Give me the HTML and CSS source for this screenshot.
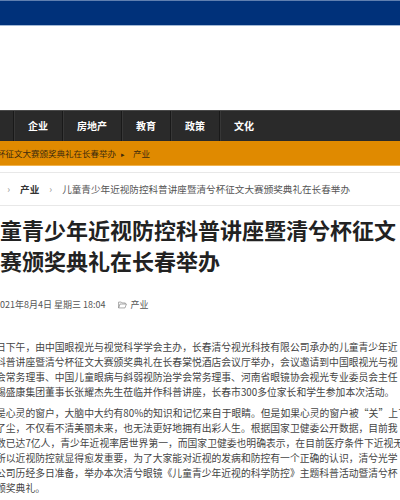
FILE: index.html
```html
<!DOCTYPE html>
<html lang="zh-CN">
<head>
  <meta charset="UTF-8">
  <meta name="viewport" content="width=device-width, initial-scale=1.0">
  <title>儿童青少年近视防控科普讲座暨清兮杯征文大赛颁奖典礼在长春举办</title>
  <link rel="stylesheet" href="styles.css">
</head>
<body>
  <div class="topbar"></div>
  <div class="header"></div>

  <nav class="nav">
    <ul class="nav-list">
      <li class="nav-item">首页</li>
      <li class="nav-item">企业</li>
      <li class="nav-item">房地产</li>
      <li class="nav-item">教育</li>
      <li class="nav-item">政策</li>
      <li class="nav-item">文化</li>
    </ul>
  </nav>

  <!-- scrolling news ticker -->
  <div class="ticker">
    <div class="ticker-inner">
      <span>儿童青少年近视防控科普讲座暨清兮杯征文大赛颁奖典礼在长春举办</span><span class="ticker-arrow">▸</span><span>产业</span>
    </div>
  </div>

  <div class="article">
    <div class="crumbs">
      <span>首页</span><span class="crumb-sep">›</span><span class="crumb-cat">产业</span><span class="crumb-sep">›</span><span>儿童青少年近视防控科普讲座暨清兮杯征文大赛颁奖典礼在长春举办</span>
    </div>

    <h1 class="title">儿童青少年近视防控科普讲座暨清兮杯征文大赛颁奖典礼在长春举办</h1>

    <div class="meta">
      <svg class="meta-icon" viewBox="0 0 10 10"><circle cx="5" cy="5" r="4.2" fill="none" stroke="#888" stroke-width="0.9"/><path d="M5 2.6V5h1.8" fill="none" stroke="#888" stroke-width="0.9"/></svg>
      <span>2021年8月4日 星期三 18:04</span>
      <svg class="meta-icon folder" viewBox="0 0 10 9"><path d="M0.6 1.2h3l0.9 1h3.6v1.2M0.6 1.2v6.6h7.2l1.6-4.4H2.2L0.6 7.8" fill="none" stroke="#888" stroke-width="0.8" stroke-linejoin="round"/></svg>
      <span>产业</span>
    </div>

    <div class="content">
      <p>日下午，由中国眼视光与视觉科学学会主办，长春清兮视光科技有限公司承办的儿童青少年近<br>科普讲座暨清兮杯征文大赛颁奖典礼在长春棠悦酒店会议厅举办，会议邀请到中国眼视光与视<br>会常务理事、中国儿童眼病与斜弱视防治学会常务理事、河南省眼镜协会视光专业委员会主任<br>锡盛康集团董事长张耀杰先生莅临并作科普讲座，长春市300多位家长和学生参加本次活动。</p>
      <p>是心灵的窗户，大脑中大约有80%的知识和记忆来自于眼睛。但是如果心灵的窗户被“关”上了，<br>了尘，不仅看不清美丽未来，也无法更好地拥有出彩人生。根据国家卫健委公开数据，目前我<br>数已达7亿人，青少年近视率居世界第一，而国家卫健委也明确表示，在目前医疗条件下近视无<br>所以近视防控就显得愈发重要，为了大家能对近视的发病和防控有一个正确的认识，清兮光学<br>公司历经多日准备，举办本次清兮眼镜《儿童青少年近视的科学防控》主题科普活动暨清兮杯<br>颁奖典礼。</p>
    </div>
  </div>
</body>
</html>
```

FILE: styles.css
```css
/* Reset basic styles */
* {
  margin: 0;
  padding: 0;
  box-sizing: border-box;
}

html,
body {
  overflow: hidden;
}

body {
  font-family: "Noto Sans CJK SC", "Noto Sans", sans-serif;
  background-color: #ffffff;
  color: #333;
}

.topbar {
  height: 26px;
  background-color: #00317a;
  border-top: 1px solid #5f7fb0;
  border-bottom: 1px solid #a3b9d6;
}

.header {
  height: 84px;
}

/* Main navigation */
.nav {
  height: 31px;
  background-color: #2a2a2a;
  border-top: 1px solid #4a4a4a;
}

.nav-list {
  display: flex;
  list-style: none;
  margin-left: -35px;
  height: 100%;
}

.nav-item {
  padding: 0 14px;
  color: #ffffff;
  font-size: 10px;
  font-weight: bold;
  line-height: 30px;
  border-left: 1px solid #191919;
  box-shadow: inset 1px 0 0 #373737;
}

.nav-item:first-child {
  border-left: none;
  box-shadow: none;
}

/* Ticker */
.ticker {
  height: 25px;
  background-color: #e08a00;
  border-bottom: 1px solid #efb24e;
  overflow: hidden;
  white-space: nowrap;
  font-size: 8.5px;
  line-height: 24px;
  color: #3d2b0e;
}

.ticker-inner {
  margin-left: -139px;
}

.ticker-arrow {
  margin: 0 8px 0 5px;
  font-size: 7px;
}

/* Article */
.article {
  margin: 6px 0 0 -22px;
  width: 720px;
}

.crumbs {
  height: 34px;
  border-top: 1px solid #e8e8e8;
  border-bottom: 1px solid #e8e8e8;
  font-size: 9.6px;
  line-height: 32px;
  color: #555;
  white-space: nowrap;
}

.crumb-sep {
  margin: 0 10px;
  color: #888;
}

.crumb-cat {
  font-weight: bold;
  color: #333;
}

.title {
  margin-top: 8px;
  width: 430px;
  font-size: 22px;
  line-height: 31px;
  font-weight: bold;
  color: #222;
}

.meta {
  display: flex;
  align-items: center;
  margin-top: 21px;
  font-size: 9px;
  line-height: 16px;
  color: #555;
  white-space: nowrap;
}

.meta-icon {
  width: 10px;
  height: 10px;
  margin-right: 7px;
}

.meta-icon.folder {
  width: 9px;
  height: 8px;
  margin-left: 12px;
  margin-right: 4px;
}

.content {
  margin: 27px 0 0 18px;
  font-size: 9.8px;
  line-height: 15px;
  color: #444;
  white-space: nowrap;
}

.content p {
  margin-bottom: 6px;
}
```
